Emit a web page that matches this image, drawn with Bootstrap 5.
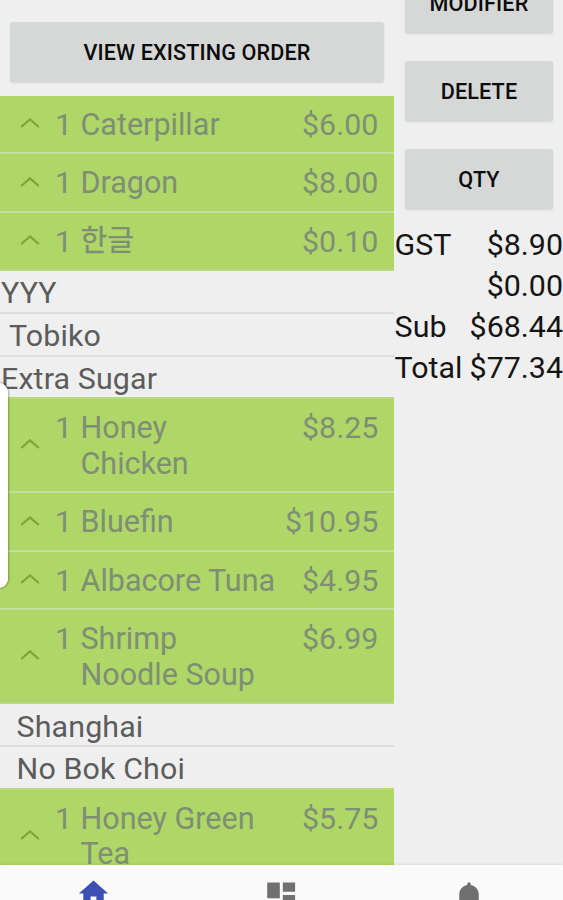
<!DOCTYPE html>
<html lang="en">
<head>
<meta charset="utf-8">
<meta name="viewport" content="width=device-width, initial-scale=1">
<title>Order</title>
<link href="https://cdn.jsdelivr.net/npm/bootstrap@5.3.0/dist/css/bootstrap.min.css" rel="stylesheet">
<style>
body{background:#efefef;font-family:Roboto,"Noto Sans CJK KR",sans-serif;font-size:30.4px;line-height:35.7px;height:900px}
.screen{height:900px}
.order-pane{width:394px}
.order-head{height:96px;padding:22px 10px 0}
.pos-btn{height:60px;background:#d6d8d7;border:0;border-radius:3px;color:#0c0c0c;font-size:21.6px;font-weight:500;line-height:60px;padding:1px 0 0;letter-spacing:.13px;box-shadow:0 1px 2px #0000001f}
.line-item{background:#aed768;color:#7f8e74;padding:11px 15.7px 0 55px;min-height:58.4px;border-bottom:2px solid #c3dfa0}
.line-item.two-line{min-height:94.2px}
.line-item.last-item{border-bottom-color:#b9d984}
.item-name{margin-left:8.4px;width:210px;font-size:30.5px}
.item-name:lang(ko){font-size:29px;-webkit-text-stroke:.3px #7f8e74}
.chev{left:20px;top:50%;margin-top:-6px;width:20px;height:10px}
.mod{height:42.7px;padding-top:4.2px;color:#5c5c5c;border-bottom:2px solid #dcdcdc;letter-spacing:.12px}
.mod.last-mod{border-bottom-color:#b6d97b}
.pad-a{padding-left:1px}.pad-b{padding-left:9px}.pad-c{padding-left:16.6px}
.actions{padding:0 10px 0 11px;gap:28px;margin-top:-27px}
.totals{margin-top:15px;color:#151515}
.totals>div{height:41.1px;padding-top:3px}
.totals span:first-child:not(:last-child){padding-left:.6px}
.drawer-tab{left:-12px;top:383px;width:19.5px;height:205px;border-radius:9px;background:#fff;box-shadow:0 0 2px 1px #0000004d}
.tabs{height:35px;background:#fafafa;box-shadow:0 -1px 2px #00000014}
.tabs svg{width:36px;height:36px;margin-top:13px}
.tabs .home-icon{width:35px;height:35px;margin-top:11px}
</style>
<script src="https://cdn.jsdelivr.net/npm/bootstrap@5.3.0/dist/js/bootstrap.bundle.min.js"></script>
</head>
<body class="overflow-hidden">
<svg class="d-none"><symbol id="up" viewBox="0 0 20 10"><path d="M1.2 9 10 1.3 18.800 9" fill="none" stroke="#7fa534" stroke-width="2.200"/></symbol></svg>
<div class="screen d-flex flex-column position-relative overflow-hidden">
<main class="d-flex flex-grow-1 overflow-hidden">
<section class="order-pane flex-shrink-0">
<div class="order-head"><button class="btn pos-btn w-100">VIEW EXISTING ORDER</button></div>
<div class="line-item d-flex position-relative"><svg class="chev position-absolute"><use href="#up"/></svg><span>1</span><span class="item-name">Caterpillar</span><span class="ms-auto">$6.00</span></div>
<div class="line-item d-flex position-relative"><svg class="chev position-absolute"><use href="#up"/></svg><span>1</span><span class="item-name">Dragon</span><span class="ms-auto">$8.00</span></div>
<div class="line-item last-item d-flex position-relative"><svg class="chev position-absolute"><use href="#up"/></svg><span>1</span><span class="item-name" lang="ko">한글</span><span class="ms-auto">$0.10</span></div>
<div class="mod pad-a">YYY</div>
<div class="mod pad-b">Tobiko</div>
<div class="mod last-mod pad-a">Extra Sugar</div>
<div class="line-item two-line d-flex position-relative"><svg class="chev position-absolute"><use href="#up"/></svg><span>1</span><span class="item-name">Honey<br>Chicken</span><span class="ms-auto">$8.25</span></div>
<div class="line-item d-flex position-relative"><svg class="chev position-absolute"><use href="#up"/></svg><span>1</span><span class="item-name">Bluefin</span><span class="ms-auto">$10.95</span></div>
<div class="line-item d-flex position-relative"><svg class="chev position-absolute"><use href="#up"/></svg><span>1</span><span class="item-name">Albacore Tuna</span><span class="ms-auto">$4.95</span></div>
<div class="line-item two-line last-item d-flex position-relative"><svg class="chev position-absolute"><use href="#up"/></svg><span>1</span><span class="item-name">Shrimp<br>Noodle Soup</span><span class="ms-auto">$6.99</span></div>
<div class="mod pad-c">Shanghai</div>
<div class="mod last-mod pad-c">No Bok Choi</div>
<div class="line-item two-line d-flex position-relative"><svg class="chev position-absolute"><use href="#up"/></svg><span>1</span><span class="item-name">Honey Green<br>Tea</span><span class="ms-auto">$5.75</span></div>
</section>
<aside class="flex-grow-1">
<div class="actions d-flex flex-column"><button class="btn pos-btn">MODIFIER</button><button class="btn pos-btn">DELETE</button><button class="btn pos-btn">QTY</button></div>
<div class="totals">
<div class="d-flex justify-content-between"><span>GST</span><span>$8.90</span></div>
<div class="d-flex justify-content-end"><span>$0.00</span></div>
<div class="d-flex justify-content-between"><span>Sub</span><span>$68.44</span></div>
<div class="d-flex justify-content-between"><span>Total</span><span>$77.34</span></div>
</div>
</aside>
</main>
<nav class="tabs d-flex flex-shrink-0 position-relative">
<div class="col-4 d-flex justify-content-center"><svg class="home-icon" viewBox="0 0 24 24"><path fill="#3c50b4" d="M10 20v-6h4v6h5v-8h3L12 3 2 12h3v8z"/></svg></div>
<div class="col-4 d-flex justify-content-center"><svg viewBox="0 0 24 24"><path fill="#707070" d="M2.800 3h8.400v10.500H2.800zm10.400 0h8.200v6.200h-8.200zm0 8.400h8.200V21h-8.200zM2.800 15.500h8.400V21H2.800z"/></svg></div>
<div class="col-4 d-flex justify-content-center"><svg viewBox="0 0 24 24"><path fill="#707070" d="M12 22a2 2 0 0 0 2-2h-4a2 2 0 0 0 2 2zm6.500-6v-5c0-3.100-2-5.600-5.300-6.300V4a1.200 1.200 0 0 0-2.400 0v.7C7.500 5.400 5.500 7.900 5.500 11v5l-2 2v1h17v-1z"/></svg></div>
</nav>
<div class="drawer-tab position-absolute"></div>
</div>
</body>
</html>
